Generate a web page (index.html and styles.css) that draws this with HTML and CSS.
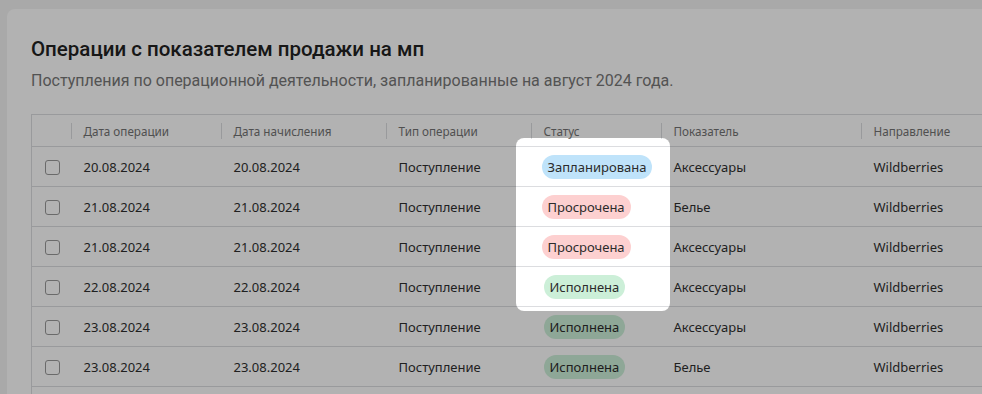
FILE: index.html
```html
<!DOCTYPE html>
<html>
<head>
    <meta name="viewport" content="width=device-width, initial-scale=1.0">
    <title>Операции</title>
    <link rel="stylesheet" href="styles.css">
</head>
<body>
    <div class="page">
        <div class="card">
            <h1 class="card-title">Операции с показателем продажи на мп</h1>
            <p class="card-subtitle">Поступления по операционной деятельности, запланированные на август 2024 года.</p>

            <table class="ops-table">
                <colgroup>
                    <col class="col-check">
                    <col class="col-date">
                    <col class="col-accrual">
                    <col class="col-type">
                    <col class="col-status">
                    <col class="col-metric">
                    <col class="col-dir">
                </colgroup>
                <thead>
                    <tr>
                        <th></th>
                        <th>Дата операции</th>
                        <th>Дата начисления</th>
                        <th>Тип операции</th>
                        <th>Статус</th>
                        <th>Показатель</th>
                        <th>Направление</th>
                    </tr>
                </thead>
                <tbody>
                    <tr>
                        <td><span class="checkbox"></span></td>
                        <td>20.08.2024</td>
                        <td>20.08.2024</td>
                        <td>Поступление</td>
                        <td><span class="badge badge-planned">Запланирована</span></td>
                        <td>Аксессуары</td>
                        <td>Wildberries</td>
                    </tr>
                    <tr>
                        <td><span class="checkbox"></span></td>
                        <td>21.08.2024</td>
                        <td>21.08.2024</td>
                        <td>Поступление</td>
                        <td><span class="badge badge-overdue">Просрочена</span></td>
                        <td>Белье</td>
                        <td>Wildberries</td>
                    </tr>
                    <tr>
                        <td><span class="checkbox"></span></td>
                        <td>21.08.2024</td>
                        <td>21.08.2024</td>
                        <td>Поступление</td>
                        <td><span class="badge badge-overdue">Просрочена</span></td>
                        <td>Аксессуары</td>
                        <td>Wildberries</td>
                    </tr>
                    <tr>
                        <td><span class="checkbox"></span></td>
                        <td>22.08.2024</td>
                        <td>22.08.2024</td>
                        <td>Поступление</td>
                        <td><span class="badge badge-done">Исполнена</span></td>
                        <td>Аксессуары</td>
                        <td>Wildberries</td>
                    </tr>
                    <tr>
                        <td><span class="checkbox"></span></td>
                        <td>23.08.2024</td>
                        <td>23.08.2024</td>
                        <td>Поступление</td>
                        <td><span class="badge badge-done">Исполнена</span></td>
                        <td>Аксессуары</td>
                        <td>Wildberries</td>
                    </tr>
                    <tr>
                        <td><span class="checkbox"></span></td>
                        <td>23.08.2024</td>
                        <td>23.08.2024</td>
                        <td>Поступление</td>
                        <td><span class="badge badge-done">Исполнена</span></td>
                        <td>Белье</td>
                        <td>Wildberries</td>
                    </tr>
                    <tr class="row-more">
                        <td></td><td></td><td></td><td></td><td></td><td></td><td></td>
                    </tr>
                </tbody>
            </table>
        </div>
    </div>

    <!-- tour spotlight over the status column -->
    <div class="spotlight"></div>
</body>
</html>
```

FILE: styles.css
```css
html, body {
    margin: 0;
    padding: 0;
    height: 100%;
    overflow: hidden;
}

body {
    background: #f2f2f2;
    font-family: 'Noto Sans', 'Open Sans', sans-serif;
    color: #2f2f2f;
}

.page {
    padding: 9px 0 0 7px;
}

.card {
    background: #ffffff;
    border-radius: 8px 0 0 0;
    padding: 28px 0 0 24px;
    width: 1100px;
    height: 500px;
}

.card-title {
    font-family: Roboto, sans-serif;
    font-size: 20.5px;
    font-weight: 500;
    line-height: 24px;
    color: #222;
    margin: 0;
}

.card-subtitle {
    font-family: Roboto, sans-serif;
    font-size: 16px;
    line-height: 20px;
    color: #777;
    margin: 10px 0 0;
}

.ops-table {
    margin-top: 23px;
    border-collapse: collapse;
    table-layout: fixed;
    width: 1060px;
    border-top: 1px solid #dcdde0;
    border-left: 1px solid #dcdde0;
}

.col-check { width: 39px; }
.col-date { width: 150px; }
.col-accrual { width: 165px; }
.col-type { width: 145px; }
.col-status { width: 130px; }
.col-metric { width: 200px; }
.col-dir { width: 231px; }

.ops-table th {
    position: relative;
    height: 31px;
    padding: 0 0 0 13px;
    text-align: left;
    font-size: 11.7px;
    font-weight: 400;
    color: #737373;
    border-bottom: 1px solid #dcdde0;
    white-space: nowrap;
}

.ops-table th + th::before {
    content: '';
    position: absolute;
    left: 0;
    top: 8px;
    height: 16px;
    border-left: 1px solid #dcdde0;
}

.ops-table td {
    height: 39px;
    padding: 0 0 0 13px;
    font-size: 13px;
    border-bottom: 1px solid #dcdde0;
    white-space: nowrap;
}

.ops-table .row-more td {
    border-bottom: none;
}

.checkbox {
    display: block;
    width: 13px;
    height: 13px;
    border: 1.5px solid #999;
    border-radius: 3px;
    margin-top: 1px;
}

.badge {
    display: inline-block;
    height: 24px;
    line-height: 24px;
    padding: 0 6px;
    border-radius: 12px;
    margin-left: -2px;
    color: #2b2b2b;
}

.badge-planned { background: #bfe3fa; }
.badge-overdue { background: #fdd0d0; }
.badge-done {
    background: #ccefd8;
    margin-left: 0;
}

.spotlight {
    position: absolute;
    left: 516px;
    top: 138px;
    width: 154px;
    height: 173px;
    border-radius: 8px;
    box-shadow: 0 0 0 2000px rgba(0, 0, 0, 0.3);
    pointer-events: none;
}
```
